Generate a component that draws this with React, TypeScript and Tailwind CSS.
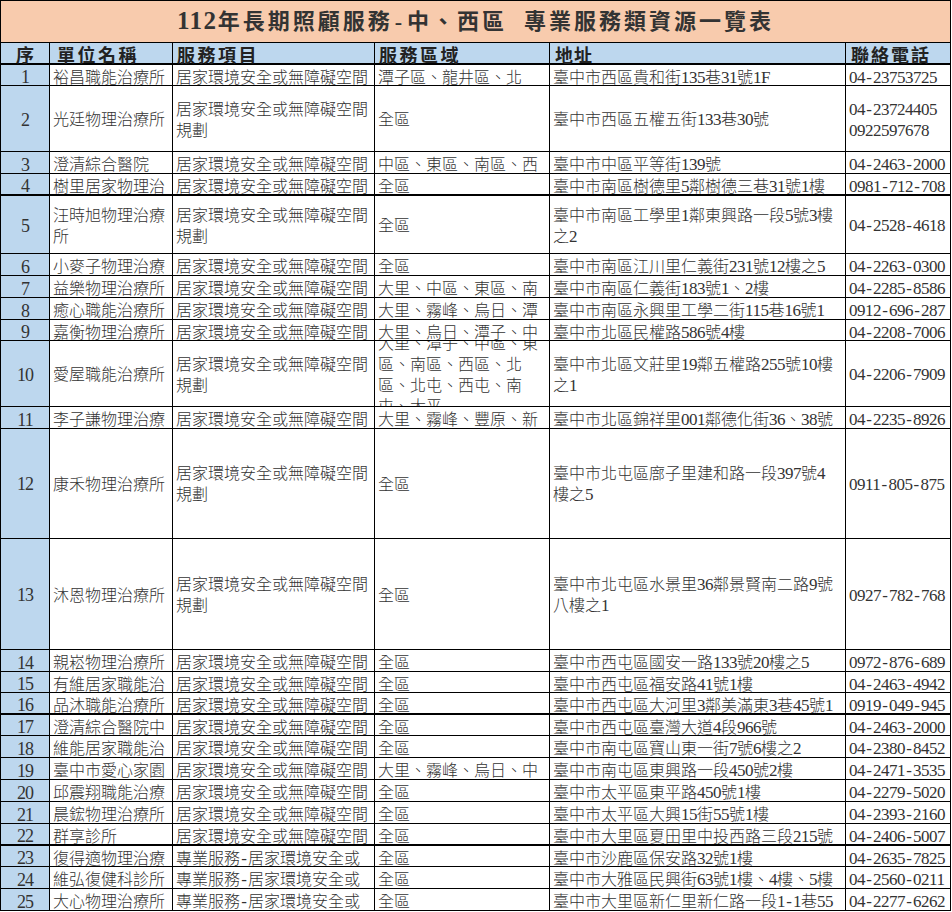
const cols = "grid grid-cols-[50px_123px_202px_175px_296px_105px] grid-rows-[minmax(0,1fr)]";
const P = "居家環境安全或無障礙空間";
const W = ["居家環境安全或無障礙空間", "規劃"];
const S = "專業服務-居家環境安全或";
const A = "全區";

type R = { h: string; n: string[]; p: string[]; a: string[]; d: string[]; t: string[] };
const r = (h: string, n: string | string[], p: string | string[], a: string | string[], d: string | string[], t: string | string[]): R => ({
  h,
  n: ([] as string[]).concat(n),
  p: ([] as string[]).concat(p),
  a: ([] as string[]).concat(a),
  d: ([] as string[]).concat(d),
  t: ([] as string[]).concat(t),
});

const rows: R[] = [
  r("h-[21px] border-b", "裕昌職能治療所", P, "潭子區、龍井區、北", "臺中市西區貴和街135巷31號1F", "04-23753725"),
  r("h-[66px] border-b [&>div]:pt-[2px]", "光廷物理治療所", W, A, "臺中市西區五權五街133巷30號", ["04-23724405", "0922597678"]),
  r("h-[22px] border-b", "澄清綜合醫院", P, "中區、東區、南區、西", "臺中市中區平等街139號", "04-2463-2000"),
  r("h-[22px] border-b-2", "樹里居家物理治", P, A, "臺中市南區樹德里5鄰樹德三巷31號1樓", "0981-712-708"),
  r("h-[58px] border-b [&>div]:pt-[2px]", ["汪時旭物理治療", "所"], W, A, ["臺中市南區工學里1鄰東興路一段5號3樓", "之2"], "04-2528-4618"),
  r("h-[22px] border-b", "小麥子物理治療", P, A, "臺中市南區江川里仁義街231號12樓之5", "04-2263-0300"),
  r("h-[22px] border-b", "益樂物理治療所", P, "大里、中區、東區、南", "臺中市南區仁義街183號1、2樓", "04-2285-8586"),
  r("h-[22px] border-b", "癒心職能治療所", P, "大里、霧峰、烏日、潭", "臺中市南區永興里工學二街115巷16號1", "0912-696-287"),
  r("h-[21px] border-b", "嘉衡物理治療所", P, "大里、烏日、潭子、中", "臺中市北區民權路586號4樓", "04-2208-7006"),
  r("h-[66px] border-b [&>div]:pt-[2px]", "愛屋職能治療所", W, ["大里、潭子、中區、東", "區、南區、西區、北", "區、北屯、西屯、南", "屯、太平"], ["臺中市北區文莊里19鄰五權路255號10樓", "之1"], "04-2206-7909"),
  r("h-[22px] border-b", "李子謙物理治療", P, "大里、霧峰、豐原、新", "臺中市北區錦祥里001鄰德化街36、38號", "04-2235-8926"),
  r("h-[110px] border-b [&>div]:pt-[1px]", "康禾物理治療所", W, A, ["臺中市北屯區廍子里建和路一段397號4", "樓之5"], "0911-805-875"),
  r("h-[111px] border-b [&>div]:pt-[2px]", "沐恩物理治療所", W, A, ["臺中市北屯區水景里36鄰景賢南二路9號", "八樓之1"], "0927-782-768"),
  r("h-[22px] border-b", "親崧物理治療所", P, A, "臺中市西屯區國安一路133號20樓之5", "0972-876-689"),
  r("h-[21px] border-b", "有維居家職能治", P, A, "臺中市西屯區福安路41號1樓", "04-2463-4942"),
  r("h-[22px] border-b-2", "品沐職能治療所", P, A, "臺中市西屯區大河里3鄰美滿東3巷45號1", "0919-049-945"),
  r("h-[21px] border-b", "澄清綜合醫院中", P, A, "臺中市西屯區臺灣大道4段966號", "04-2463-2000"),
  r("h-[22px] border-b", "維能居家職能治", P, A, "臺中市南屯區寶山東一街7號6樓之2", "04-2380-8452"),
  r("h-[22px] border-b", "臺中市愛心家園", P, "大里、霧峰、烏日、中", "臺中市南屯區東興路一段450號2樓", "04-2471-3535"),
  r("h-[22px] border-b", "邱震翔職能治療", P, A, "臺中市太平區東平路450號1樓", "04-2279-5020"),
  r("h-[22px] border-b", "晨鋐物理治療所", P, A, "臺中市太平區大興15街55號1樓", "04-2393-2160"),
  r("h-[22px] border-b-2", "群享診所", P, A, "臺中市大里區夏田里中投西路三段215號", "04-2406-5007"),
  r("h-[21px] border-b", "復得適物理治療", S, A, "臺中市沙鹿區保安路32號1樓", "04-2635-7825"),
  r("h-[22px] border-b", "維弘復健科診所", S, A, "臺中市大雅區民興街63號1樓、4樓、5樓", "04-2560-0211"),
  r("h-[22px] border-b", "大心物理治療所", S, A, "臺中市大里區新仁里新仁路一段1-1巷55", "04-2277-6262"),
];

function Txt({ s }: { s: string }) {
  const parts = s.split(/([0-9A-Z]+|-)/).filter(Boolean);
  return (
    <>
      {parts.map((x, i) =>
        x === "-" ? (
          <span key={i} className="mx-[1.2px] text-[17px]">-</span>
        ) : /^[0-9A-Z]+$/.test(x) ? (
          <span key={i} className="text-[17px] tracking-[-0.5px]">{x}</span>
        ) : (
          <span key={i}>{x}</span>
        )
      )}
    </>
  );
}

function Cell({ lines, className = "" }: { lines: string[]; className?: string }) {
  return (
    <div className={`flex items-center overflow-hidden border-r border-black pl-[3px] pt-[4px] ${className}`}>
      <div className="whitespace-nowrap leading-[21px]">
        {lines.map((l, i) => (
          <div key={i}>
            <Txt s={l} />
          </div>
        ))}
      </div>
    </div>
  );
}

export default function App() {
  return (
    <div className="w-[951px] bg-white text-[16px] font-light text-[#333] font-['Liberation_Serif','Noto_Sans_CJK_TC',serif]">
      <div className="flex h-[43px] items-center justify-center border border-black bg-[#F8CBAD] pb-[1px] text-[22px] font-bold tracking-[3px] text-[#333] whitespace-pre">
        <span className="text-[25px] tracking-[1.5px]">112</span>年長期照顧服務<span className="mx-[2px]">-</span>中、西區  專業服務類資源一覽表
      </div>
      <div className={`${cols} h-[22px] border-b-2 border-black bg-[#BDD7EE] text-[18px] font-bold leading-[26px] text-[#222]`}>
        <div className="border-x border-black text-center">序</div>
        <div className="border-r border-black pl-[7px] tracking-[2.5px]">單位名稱</div>
        <div className="border-r border-black pl-[4px] tracking-[2.5px]">服務項目</div>
        <div className="border-r border-black pl-[4px] tracking-[2.5px]">服務區域</div>
        <div className="border-r border-black pl-[5px] tracking-[1px]">地址</div>
        <div className="border-r border-black pl-[5px] tracking-[2px]">聯絡電話</div>
      </div>
      {rows.map((row, i) => (
        <div key={i} className={`${cols} ${row.h} border-black`}>
          <div className="flex items-center justify-center border-x border-black bg-[#BDD7EE] pt-[4px] text-[18px] leading-[20px] tracking-[-1px]">{i + 1}</div>
          <Cell lines={row.n} />
          <Cell lines={row.p} />
          <Cell lines={row.a} />
          <Cell lines={row.d} />
          <Cell lines={row.t} />
        </div>
      ))}
    </div>
  );
}
